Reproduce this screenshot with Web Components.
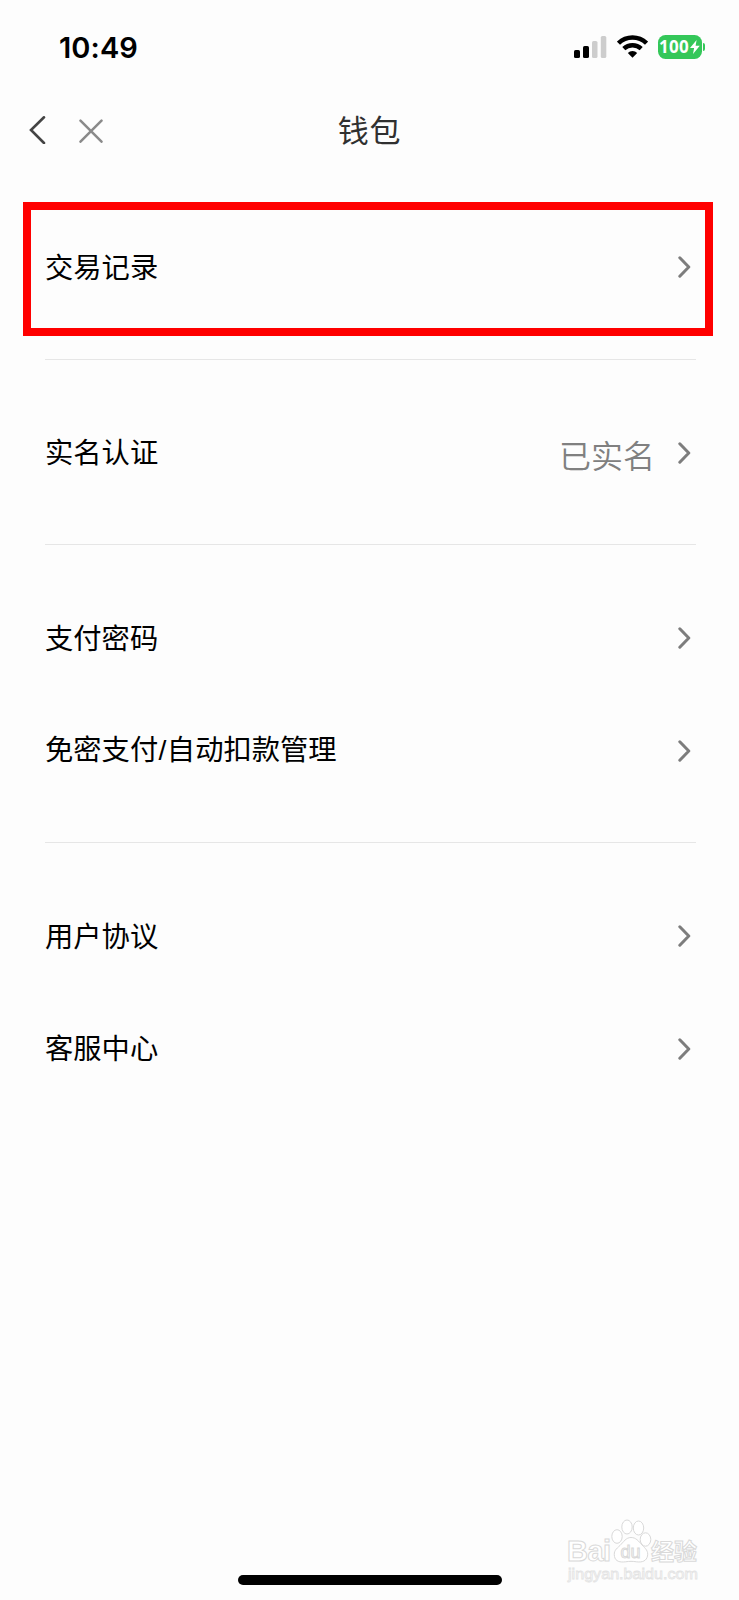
<!DOCTYPE html>
<html lang="zh-CN">
<head>
<meta charset="utf-8">
<title>钱包</title>
<style>
html,body{margin:0;padding:0;background:#fdfdfd}
body{font-family:"Noto Sans CJK SC",sans-serif;overflow:hidden}
</style>
</head>
<body>
<wallet-app></wallet-app>
<script>
class Base extends HTMLElement{
  constructor(){super();this.attachShadow({mode:"open"}).innerHTML=this.view();}
}
customElements.define("status-bar",class extends Base{view(){return `
<style>
:host{display:flex;height:94px;box-sizing:border-box;justify-content:space-between;padding:0 34px 1px 59px;font-family:Inter,sans-serif;align-items:center}
time{font-size:29px;font-weight:600;line-height:34px;letter-spacing:.1px;color:#000;padding-top:2px}
.r{display:flex;align-items:center}
svg{display:block}
.bars{margin-right:10px}
.wifi{margin-right:10px}
.bat{display:flex;align-items:center;justify-content:center;gap:1px;width:44px;height:24px;border-radius:7.5px;background:#34c759;color:#fff;font:700 17px/24px "Open Sans",sans-serif;letter-spacing:.3px}
.cap{width:2.5px;height:8px;background:#34c759;border-radius:0 3px 3px 0;margin-left:1px}
</style>
<time>10:49</time>
<div class="r">
<svg class="bars" width="33" height="22" viewBox="0 0 33 22"><rect x="0" y="14" width="6" height="8" rx="1.6"/><rect x="9" y="10" width="6" height="12" rx="1.6"/><rect x="18" y="5" width="5.5" height="17" rx="1.6" fill="#cdcdcd"/><rect x="26.8" y="0" width="5.5" height="22" rx="1.6" fill="#cdcdcd"/></svg>
<svg class="wifi" width="31" height="23" viewBox="0 0 31 23"><g fill="none" stroke="#000" stroke-width="4.4"><path d="M1.5 8.2a20.2 20.2 0 0 1 28 0"/><path d="M6.8 13.7a12.7 12.7 0 0 1 17.4 0"/></g><path d="M10.8 17.9a6.8 6.8 0 0 1 9.4 0L15.5 22.8Z"/></svg>
<div class="bat"><span>100</span><svg width="10" height="14" viewBox="0 0 10 14"><path fill="#fff" d="M6.6 0 0 8h4.1L3 14 9.8 5.7H5.6Z"/></svg></div><i class="cap"></i>
</div>`}});
customElements.define("nav-bar",class extends Base{view(){return `
<style>
:host{display:grid;grid-template-columns:1fr auto 1fr;align-items:center;height:73px;padding:0 28px}
div{display:flex;gap:33px;align-items:center;padding-bottom:1px}
svg{display:block;fill:none}
svg+svg{margin-top:1px}
h1{margin:0;font-size:31px;line-height:44px;font-weight:400;color:#303030;letter-spacing:.8px;padding-bottom:4px}
</style>
<div><svg width="18" height="28" viewBox="0 0 18 28"><path d="M16 1.3 3 14l13 13" stroke="#444" stroke-width="2.6" stroke-linecap="round"/></svg>
<svg width="24" height="24" viewBox="0 0 24 24"><path d="m1.5 1.7 21 21m0-21-21 21" stroke="#8a8a8a" stroke-width="2.5" stroke-linecap="round"/></svg></div>
<h1><slot></slot></h1>`}});
customElements.define("menu-row",class extends Base{view(){return `
<style>
:host{display:flex;align-items:center;height:112.5px;padding-right:5px;color:#000;font-size:28.3px;line-height:40px}
.label{flex:1;white-space:nowrap;padding-bottom:3px}
.note{font-size:32px;font-weight:350;color:#808080;line-height:40px;margin-right:23px;padding-top:3px}
svg{display:block;fill:none}
</style>
<span class="label"><slot></slot></span><span class="note"><slot name="note"></slot></span>
<svg width="13" height="22" viewBox="0 0 13 22"><path d="m1.8 1.8 9 9.2-9 9.2" stroke="#7d7d7d" stroke-width="3" stroke-linecap="round" stroke-linejoin="round"/></svg>`}});
customElements.define("menu-group",class extends Base{view(){return `
<style>
:host{display:block;margin:0 43px -1px 45px;padding:37.5px 0 35.5px;border-bottom:1px solid #e6e6e6}
:host(:last-of-type){border:0}
</style><slot></slot>`}});
customElements.define("focus-frame",class extends Base{view(){return `
<style>:host{display:block;position:absolute;left:23px;top:202px;width:690px;height:133.5px;box-sizing:border-box;border:8px solid #f00}</style>`}});
customElements.define("home-indicator",class extends Base{view(){return `
<style>:host{display:block;width:264px;height:10px;border-radius:5px;background:#000;margin:auto auto 15px 238px}</style>`}});
customElements.define("brand-mark",class extends Base{view(){return `
<style>
:host{display:block;position:absolute;left:566px;top:1518px}
svg{display:block}
</style>
<svg width="136" height="68" viewBox="0 0 136 68">
<g fill="#fff" stroke="#d9d9d9" stroke-width="1">
<text x="1" y="43" font-family="Liberation Sans,sans-serif" font-weight="700" font-size="29" textLength="44">Bai</text>
<ellipse cx="51" cy="18.5" rx="5.2" ry="6.8"/><ellipse cx="61" cy="9" rx="5.2" ry="7"/><ellipse cx="72.5" cy="10" rx="5.2" ry="7"/><ellipse cx="79.5" cy="21.5" rx="5.3" ry="6.7"/>
<path d="M65 19.5c-5 0-7.5 4.5-11 8-4 3.6-6.5 5.5-5.5 11 1 5 5.5 6 11 5.3 4-.6 7-.6 11 0 6 .8 10-1 11-5.8 1-5-2-7.5-5.5-11-3.5-4-6-7.5-11-7.5Z"/>
<text x="54.5" y="40" font-family="Liberation Sans,sans-serif" font-size="18" textLength="20">du</text>
<text x="85" y="42" font-family="Liberation Sans,Noto Sans CJK SC,sans-serif" font-weight="700" font-size="23" textLength="46">经验</text>
</g>
<text x="2" y="60.5" font-family="Liberation Sans,sans-serif" font-size="15" textLength="130" lengthAdjust="spacingAndGlyphs" fill="#fff" stroke="#e3e3e3" stroke-width=".8">jingyan.baidu.com</text>
</svg>`}});
customElements.define("wallet-app",class extends Base{view(){return `
<style>
:host{display:flex;flex-direction:column;position:relative;width:739px;height:1600px;overflow:hidden;background:#fdfdfd}
main{display:block;padding-top:6.25px}
.slash{font-family:"Liberation Sans",sans-serif;padding:0 .4px}
</style>
<status-bar></status-bar>
<nav-bar>钱包</nav-bar>
<main>
<menu-group><menu-row>交易记录</menu-row></menu-group>
<menu-group><menu-row>实名认证<span slot="note">已实名</span></menu-row></menu-group>
<menu-group><menu-row>支付密码</menu-row><menu-row>免密支付<span class="slash">/</span>自动扣款管理</menu-row></menu-group>
<menu-group><menu-row>用户协议</menu-row><menu-row>客服中心</menu-row></menu-group>
</main>
<home-indicator></home-indicator>
<focus-frame></focus-frame>
<brand-mark></brand-mark>`}});
</script>
</body>
</html>
